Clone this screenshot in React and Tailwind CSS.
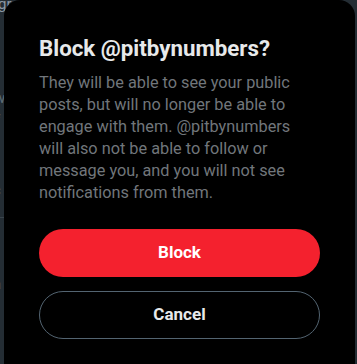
import React from 'react';

const bodyLines = [
  'They will be able to see your public',
  'posts, but will no longer be able to',
  'engage with them. @pitbynumbers',
  'will also not be able to follow or',
  'message you, and you will not see',
  'notifications from them.',
];

function App() {
  return (
    <div className="relative h-[364px] w-[357px] overflow-hidden bg-[#242d34] font-['Roboto',_'Liberation_Sans',_sans-serif]">
      {/* page behind the overlay, mostly hidden by the dialog */}
      <div className="absolute inset-0 text-[15px] leading-5 text-[#5f6d78]">
        <span className="absolute -left-[2px] -top-[6px] text-[#8b98a5]">gr</span>
        <span className="absolute -left-[6px] top-[88px]">w</span>
        <span className="absolute -left-[5px] top-[110px]">f</span>
        <span className="absolute -left-[7px] top-[180px]">c</span>
        <div className="absolute left-0 top-[217px] h-px w-[4px] bg-[#3a444c]" />
        <span className="absolute -left-[6px] top-[252px] font-bold">r</span>
        <span className="absolute -left-[7px] top-[274px]">a</span>
        <span className="absolute -left-[6px] top-[318px]">r</span>
      </div>

      <div className="relative ml-[4px] h-[380px] w-[351px] rounded-t-[16px] bg-black px-[35px] pt-[35px]">
        <h1 className="text-[22.3px] font-bold leading-[26px] text-[#e7e9ea]">Block @pitbynumbers?</h1>
        <p className="mt-[11px] text-[16.3px] leading-[22px] text-[#71767b]">
          {bodyLines.map((line) => (
            <span key={line} className="block whitespace-nowrap">
              {line}
            </span>
          ))}
        </p>
        <div className="mt-[25px] flex flex-col gap-[14px]">
          <button className="h-[48px] w-full rounded-full bg-[#f4212e] text-[17px] font-bold text-white">
            Block
          </button>
          <button className="h-[48px] w-full rounded-full border border-[#536471] bg-transparent text-[17px] font-bold text-[#e7e9ea]">
            Cancel
          </button>
        </div>
      </div>
    </div>
  );
}

export default App;
